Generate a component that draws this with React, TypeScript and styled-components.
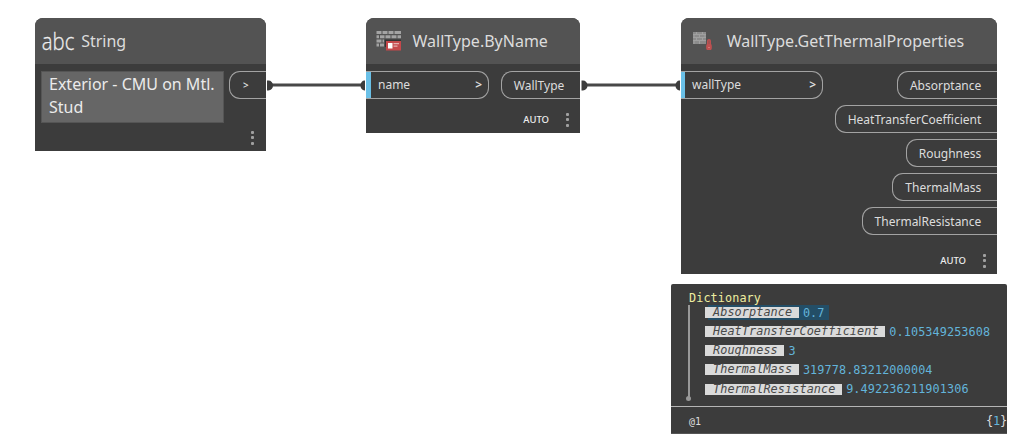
import React from 'react';
import styled, { createGlobalStyle } from 'styled-components';

const GlobalStyle = createGlobalStyle`
  *, *::before, *::after { box-sizing: border-box; }
  body { margin: 0; background: #fff; overflow: hidden; }
`;

const Canvas = styled.main`
  position: relative;
  width: 1032px;
  height: 444px;
  font-family: "Noto Sans", "Open Sans", sans-serif;
  color: #dcdcdc;
`;

const Wires = styled.svg`
  position: absolute;
  inset: 0;
`;

const Node = styled.section<{ $x: number; $width: number; $height: number }>`
  position: absolute;
  left: ${p => p.$x}px;
  top: 18px;
  width: ${p => p.$width}px;
  height: ${p => p.$height}px;
  display: flex;
  flex-direction: column;
  background: #3c3c3c;
  border-radius: 8px 8px 0 0;
  overflow: hidden;
`;

const Header = styled.header<{ $gap: number }>`
  display: flex;
  align-items: center;
  gap: ${p => p.$gap}px;
  height: 46px;
  flex: none;
  padding-left: 6px;
  background: #535353;
`;

const Title = styled.h2`
  margin: 0;
  font-size: 16px;
  font-weight: 400;
  line-height: 22px;
  white-space: nowrap;
`;

const Ports = styled.div`
  display: flex;
  justify-content: space-between;
  align-items: flex-start;
  flex: 1;
  padding-top: 7px;
`;

const OutputColumn = styled.div`
  display: flex;
  flex-direction: column;
  align-items: flex-end;
  gap: 5.6px;
`;

const Port = styled.div`
  display: flex;
  align-items: center;
  height: 28.4px;
  border: 1px solid #a3a3a3;
  font-size: 12px;
  line-height: 16px;
  white-space: nowrap;
`;

const InputPort = styled(Port)<{ $width: number; $marker: number }>`
  width: ${p => p.$width}px;
  padding-right: 6px;
  border-left: 0;
  border-radius: 0 11px 11px 0;
  &::before {
    content: "";
    align-self: stretch;
    width: ${p => p.$marker}px;
    margin-right: 7px;
    background: #6ac0e7;
  }
`;

const PortName = styled.span`
  flex: 1;
`;

const Chevron = styled.span`
  font-weight: 600;
`;

const OutputPort = styled(Port)`
  padding: 1px 15.7px 0 12px;
  border-right: 0;
  border-radius: 11px 0 0 11px;
`;

const StringOutput = styled(OutputPort)`
  width: 37px;
  padding: 0 0 0 13px;
  font-size: 10px;
`;

const StringBox = styled.div`
  width: 183px;
  height: 52px;
  margin-left: 6px;
  padding: 1px 7px;
  border: 1px solid #555;
  background: #666;
  color: #ebebeb;
  font-size: 16px;
  line-height: 23px;
`;

const Footer = styled.footer<{ $right?: number }>`
  display: flex;
  align-items: center;
  justify-content: flex-end;
  gap: 17px;
  height: 27px;
  flex: none;
  padding-right: ${p => p.$right ?? 11}px;
  font-size: 9.5px;
  font-weight: 500;
  color: #eee;
`;

const Menu = styled.span`
  display: grid;
  gap: 2.5px;
  i {
    width: 3px;
    height: 3px;
    border-radius: 1px;
    background: #a0a0a0;
  }
`;

const Preview = styled.section`
  position: absolute;
  left: 671px;
  top: 284px;
  width: 336px;
  height: 150px;
  display: flex;
  flex-direction: column;
  background: #3c3c3c;
  border-bottom: 1px solid #555;
  border-radius: 2px 2px 0 0;
  font-family: "DejaVu Sans Mono", "Liberation Mono", monospace;
  font-size: 11.8px;
  letter-spacing: 0.1px;
`;

const Tree = styled.div`
  height: 122px;
  padding: 7px 0 0 17px;
`;

const TreeTitle = styled.div`
  height: 14px;
  padding-left: 1px;
  line-height: 15px;
  color: #eeeea0;
`;

const Entries = styled.div`
  position: relative;
  height: 95px;
  padding-left: 17px;
  &::before {
    content: "";
    position: absolute;
    left: 0;
    top: 0;
    width: 1.5px;
    height: 93px;
    background: #999;
  }
  &::after {
    content: "";
    position: absolute;
    left: -2px;
    bottom: -1px;
    width: 5px;
    height: 5px;
    border-radius: 50%;
    background: #999;
  }
`;

const Entry = styled.div<{ $selected?: boolean }>`
  display: flex;
  align-items: center;
  width: max-content;
  height: 15px;
  margin-bottom: 4.15px;
  padding-right: 4px;
  background: ${p => (p.$selected ? 'linear-gradient(to right, transparent 3px, #234e67 3px)' : 'none')};
`;

const Key = styled.em`
  height: 11px;
  margin-right: 4.3px;
  padding: 0 6.4px 0 8px;
  line-height: 11px;
  background: #dadada;
  color: #484848;
`;

const Value = styled.span`
  color: #63b4da;
  line-height: 15px;
  padding-top: 1px;
`;

const PreviewFooter = styled.div`
  display: flex;
  align-items: center;
  justify-content: space-between;
  flex: 1;
  padding: 2px 0 0 18px;
  border-top: 1px solid #b5b5b5;
`;

const Level = styled.span`
  font-size: 10px;
  letter-spacing: 0;
`;

const Count = styled.span`
  font-size: 12px;
  letter-spacing: -0.2px;
  b {
    font-weight: 400;
    color: #63b4da;
  }
`;

const Dots = () => <Menu><i /><i /><i /></Menu>;

const StringIcon = () => (
  <svg width="36" height="42" viewBox="0 0 36 42">
    <text x="0.8" y="30" fontFamily="Open Sans" fontWeight="300" fontSize="24.500" textLength="32.500" lengthAdjust="spacingAndGlyphs" fill="#eeeeee" stroke="#eeeeee" strokeWidth="0.300">abc</text>
  </svg>
);

const WallIcon = () => (
  <svg width="27" height="22" viewBox="0 0 27 22">
    <g fill="#a3a3a3">
      <path d="M.5 1h5v3h-5zM6.500 1h5v3h-5zM12.500 1h5v3h-5zM18.500 1h6.500v3h-6.500z" />
      <path d="M.5 5.200h2.500v3H.5zM4 5.200h4.500v3H4zM9.500 5.200h5v3h-5zM15.500 5.200h5v3h-5zM21.500 5.200H25v3h-3.500z" />
      <path d="M.5 9.400h5v3h-5zM6.500 9.400H8v3H6.500zM.5 13.600h2.500v3H.5zM4 13.600h4v3H4z" />
    </g>
    <path d="M9 9.500h16V11H10v6H9z" fill="#343434" />
    <path d="M10 11h15v9.500H10z" fill="#c5484b" />
    <path d="M12 13h4.500v5.500H12z" fill="#fff" />
    <path d="M17.500 13H23v1.300h-5.500zM17.500 15.500h4v1.200h-4z" fill="#e4b0b0" />
  </svg>
);

const ThermalIcon = () => (
  <svg width="20" height="20" viewBox="0 0 20 20">
    <path d="M0 1h13v12H0z" fill="#8c8c8c" />
    <path d="M0 3.500h13M0 6.500h13M0 9.500h13M3.500 1v2.500M9.500 1v2.500M1 3.500v3M6.500 3.500v3M12 3.500v3M3.500 6.500v3M9.500 6.500v3M1 9.500V13M6.500 9.500V13" stroke="#a0a0a0" strokeWidth="1" fill="none" />
    <path d="M14 10a2 2 0 0 1 4 0v3c1.200 1 1.200 6-.2 6h-3.600c-1.400 0-1.400-5-.2-6z" fill="#bd5050" />
    <path d="M16 9.500V13" stroke="#8d5050" strokeWidth="1" />
    <path d="M15 16.500h2" stroke="#d57474" strokeWidth="1" />
  </svg>
);

const HeaderIcon = styled.span<{ $left: number; $width: number }>`
  display: flex;
  width: ${p => p.$width}px;
  margin-left: ${p => p.$left}px;
`;

const outputs = ['Absorptance', 'HeatTransferCoefficient', 'Roughness', 'ThermalMass', 'ThermalResistance'];
const entries = [
  ['Absorptance', '0.7'],
  ['HeatTransferCoefficient', '0.105349253608'],
  ['Roughness', '3'],
  ['ThermalMass', '319778.83212000004'],
  ['ThermalResistance', '9.492236211901306'],
];

export default function App() {
  return (
    <>
      <GlobalStyle />
      <Canvas>
        <Wires width="1032" height="444">
          <path d="M270 85h93M585 85h93" stroke="#484848" strokeWidth="3" />
          <path
            d="M267 80.500h1.500a4.500 5 0 0 1 0 10H267zM581.500 80.500h1.500a4.500 5 0 0 1 0 10h-1.500zM365 80.500h-.5a4 5 0 0 0 0 10h.5zM680 80.500h-.5a4 5 0 0 0 0 10h.5z"
            fill="#3c3c3c"
          />
        </Wires>

        <Node $x={35} $width={231} $height={133}>
          <Header $gap={4.2}>
            <HeaderIcon $left={0} $width={36}><StringIcon /></HeaderIcon>
            <Title>String</Title>
          </Header>
          <Ports>
            <StringBox>Exterior - CMU on Mtl. Stud</StringBox>
            <StringOutput><Chevron>&gt;</Chevron></StringOutput>
          </Ports>
          <Footer $right={12}><Dots /></Footer>
        </Node>

        <Node $x={366} $width={214} $height={115}>
          <Header $gap={9.5}>
            <HeaderIcon $left={4} $width={27}><WallIcon /></HeaderIcon>
            <Title>WallType.ByName</Title>
          </Header>
          <Ports>
            <InputPort $width={123} $marker={5}><PortName>name</PortName><Chevron>&gt;</Chevron></InputPort>
            <OutputPort>WallType</OutputPort>
          </Ports>
          <Footer>AUTO<Dots /></Footer>
        </Node>

        <Node $x={681} $width={316} $height={256}>
          <Header $gap={13.7}>
            <HeaderIcon $left={6} $width={20}><ThermalIcon /></HeaderIcon>
            <Title>WallType.GetThermalProperties</Title>
          </Header>
          <Ports>
            <InputPort $width={142} $marker={4}><PortName>wallType</PortName><Chevron>&gt;</Chevron></InputPort>
            <OutputColumn>
              {outputs.map(name => <OutputPort key={name}>{name}</OutputPort>)}
            </OutputColumn>
          </Ports>
          <Footer>AUTO<Dots /></Footer>
        </Node>

        <Preview>
          <Tree>
            <TreeTitle>Dictionary</TreeTitle>
            <Entries>
              {entries.map(([key, value], index) => (
                <Entry key={key} $selected={index === 0}>
                  <Key>{key}</Key>
                  <Value>{value}</Value>
                </Entry>
              ))}
            </Entries>
          </Tree>
          <PreviewFooter>
            <Level>@1</Level>
            <Count>{'{'}<b>1</b>{'}'}</Count>
          </PreviewFooter>
        </Preview>
      </Canvas>
    </>
  );
}
